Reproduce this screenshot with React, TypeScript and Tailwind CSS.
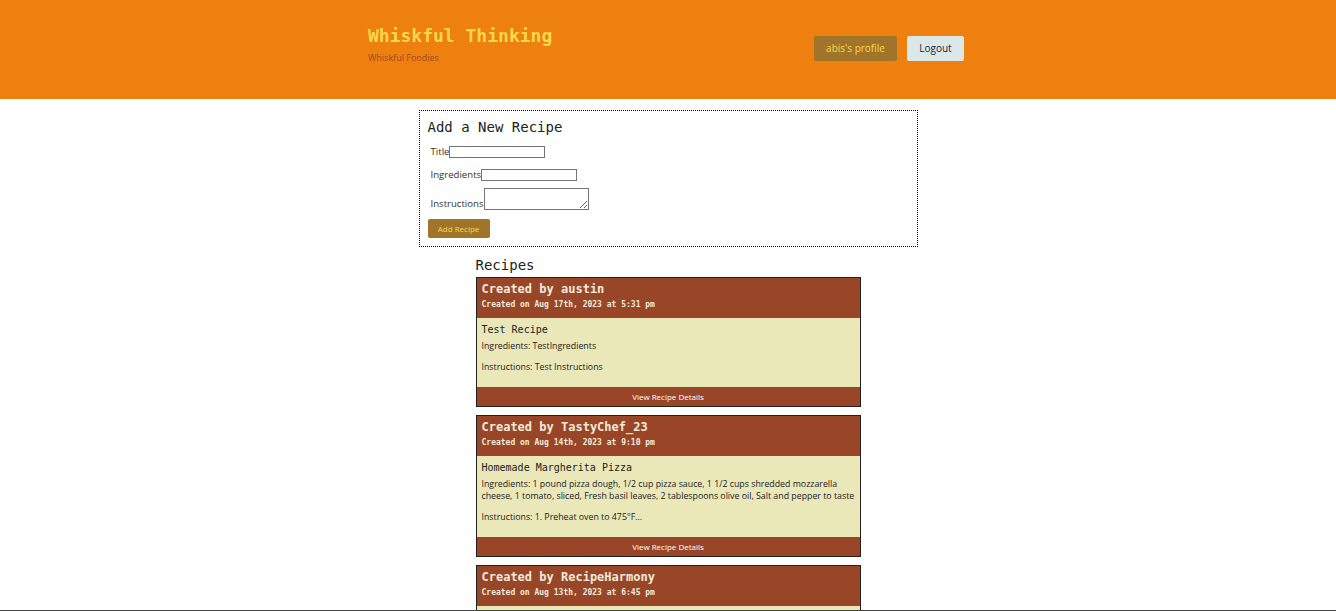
import React from "react";

const mono = "font-['DejaVu_Sans_Mono','Liberation_Mono',monospace]";
const sans = "font-['Open_Sans','Noto_Sans',sans-serif]";

type Recipe = {
  author: string;
  created: string;
  title: string;
  ingredients: string;
  instructions: string;
};

const recipes: Recipe[] = [
  {
    author: "austin",
    created: "Aug 17th, 2023 at 5:31 pm",
    title: "Test Recipe",
    ingredients: "TestIngredients",
    instructions: "Test Instructions",
  },
  {
    author: "TastyChef_23",
    created: "Aug 14th, 2023 at 9:10 pm",
    title: "Homemade Margherita Pizza",
    ingredients:
      "1 pound pizza dough, 1/2 cup pizza sauce, 1 1/2 cups shredded mozzarella cheese, 1 tomato, sliced, Fresh basil leaves, 2 tablespoons olive oil, Salt and pepper to taste",
    instructions: "1. Preheat oven to 475°F...",
  },
  {
    author: "RecipeHarmony",
    created: "Aug 13th, 2023 at 6:45 pm",
    title: "Classic Beef Stew",
    ingredients: "2 pounds beef chuck, 4 carrots, 3 potatoes, 1 onion",
    instructions: "1. Brown the beef...",
  },
];

function RecipeCard({ recipe }: { recipe: Recipe }) {
  return (
    <div className="border border-[#222] flex flex-col">
      <div className={`bg-[#994628] text-[#f2ebdc] px-[5px] pt-[3px] pb-[8px] ${mono}`}>
        <h3 className="text-[12px] leading-[16px] font-bold">Created by {recipe.author}</h3>
        <p className="text-[8px] leading-[10px] font-bold mt-[3px]">Created on {recipe.created}</p>
      </div>
      <div className="bg-[#eae7b9] pl-[5px] pr-[2px] pt-[5px] pb-[14px] text-[#222]">
        <h4 className={`text-[10px] leading-[14px] ${mono}`}>{recipe.title}</h4>
        <p className={`text-[8.8px] leading-[12px] mt-[3px] ${sans}`}>Ingredients: {recipe.ingredients}</p>
        <p className={`text-[8.8px] leading-[12px] mt-[9px] ${sans}`}>Instructions: {recipe.instructions}</p>
      </div>
      <div className={`bg-[#994628] text-white text-[8px] leading-[19px] text-center ${sans}`}>
        View Recipe Details
      </div>
    </div>
  );
}

export default function App() {
  return (
    <div className="min-h-screen bg-white">
      <header className="bg-[#ee8010] h-[99px]">
        <div className="w-[600px] mx-auto flex justify-between items-start pt-[24px] pr-[4px]">
          <div>
            <h1 className={`text-[18px] leading-[24px] font-bold text-[#fcd84b] ${mono}`}>
              Whiskful Thinking
            </h1>
            <p className={`text-[9px] leading-[12px] text-[#9c4a1c] mt-[4px] ${sans}`}>Whiskful Foodies</p>
          </div>
          <div className={`flex gap-[10px] mt-[12px] text-[10px] ${sans}`}>
            <button className="bg-[#a07429] text-[#fad94c] h-[25px] w-[83px] rounded-[2px]">abis's profile</button>
            <button className="bg-[#dce8e8] text-[#222244] h-[25px] w-[57px] rounded-[2px]">Logout</button>
          </div>
        </div>
      </header>

      <form
        className="w-[499px] mx-auto mt-[11px] border border-dotted border-black px-[8px] pt-[6px] pb-[8px] flex flex-col items-start"
        onSubmit={(e) => e.preventDefault()}
      >
        <h2 className={`text-[14px] leading-[20px] text-[#222] ${mono}`}>Add a New Recipe</h2>
        <label className={`flex items-center h-[12px] mt-[9px] ml-[3px] text-[9.6px] leading-[12px] text-[#333] ${sans}`}>
          Title
          <input className="w-[96px] h-[12px] border border-[#767676]" />
        </label>
        <label className={`flex items-center h-[12px] mt-[11px] ml-[3px] text-[9.6px] leading-[12px] text-[#333] ${sans}`}>
          Ingredients
          <input className="w-[96px] h-[12px] border border-[#767676]" />
        </label>
        <label className={`flex items-end mt-[7px] ml-[3px] text-[9.6px] leading-[12px] text-[#333] ${sans}`}>
          Instructions
          <textarea className="w-[105px] h-[22px] border border-[#767676] resize block" />
        </label>
        <button
          type="submit"
          className={`mt-[9px] bg-[#a07429] text-[#fad94c] text-[8px] w-[62px] h-[19px] rounded-[2px] ${sans}`}
        >
          Add Recipe
        </button>
      </form>

      <section className="w-[385px] mx-auto mt-[8px]">
        <h2 className={`text-[14px] leading-[20px] text-[#222] ${mono}`}>Recipes</h2>
        <div className="flex flex-col gap-[8px] mt-[2px]">
          {recipes.map((r) => (
            <RecipeCard key={r.author} recipe={r} />
          ))}
        </div>
      </section>

      <div className="fixed left-0 right-0 bottom-0 h-px bg-[#444]" />
    </div>
  );
}
